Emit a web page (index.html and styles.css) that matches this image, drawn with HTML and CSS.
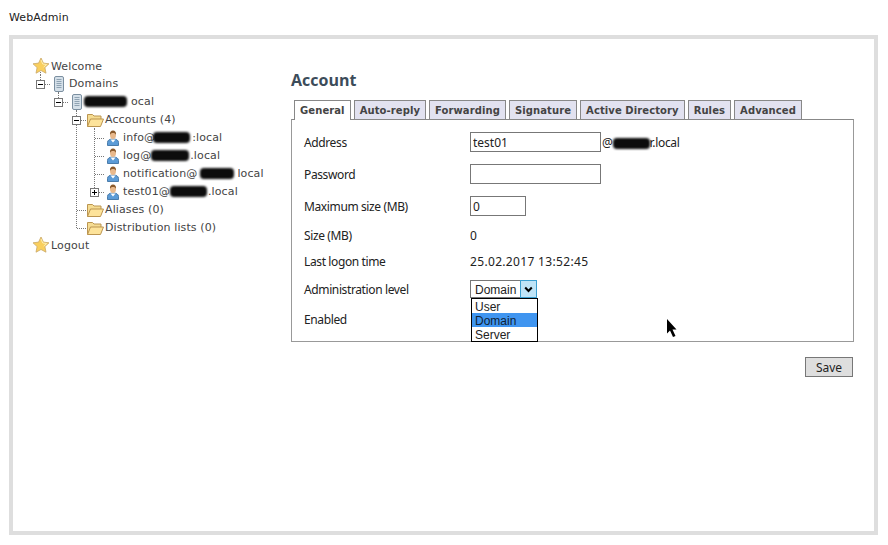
FILE: index.html
```html
<!DOCTYPE html>
<html lang="en">
<head>
<meta charset="utf-8">
<title>WebAdmin</title>
<link rel="stylesheet" href="styles.css">
</head>
<body>
<svg class="defs" width="0" height="0" aria-hidden="true">
  <defs>
    <symbol id="star" viewBox="0 0 18 18">
      <path d="M9 1l2.400 5.100 5.600.7-4.100 3.800 1.100 5.600L9 13.500l-5 2.700 1.100-5.600L1 6.800l5.600-.7z" fill="#f9cf5e" stroke="#c9a86a" stroke-width=".8" stroke-linejoin="round"/>
      <path d="M9 3l1.700 4 4 .5-3 2.600" fill="none" stroke="#fdeeb0" stroke-width="1"/>
    </symbol>
    <symbol id="server" viewBox="0 0 18 18">
      <rect x="4.500" y="1.500" width="9" height="15" rx="1.500" fill="#d5e0e9" stroke="#7b8fa0"/>
      <path d="M6.500 4.500h5M6.500 6.500h5M6.500 8.500h5M6.500 10.500h5M6.500 12.500h5" stroke="#8fa3b3" stroke-width="1"/>
    </symbol>
    <symbol id="folder" viewBox="0 0 18 18">
      <path d="M1.500 15.500V3.500h5l1.500 1.500h7v3" fill="#f5dc92" stroke="#bb9550"/>
      <path d="M1.500 15.500l3-7.500h13l-3 7.500z" fill="#fde39a" stroke="#bb9550" stroke-linejoin="round"/>
    </symbol>
    <symbol id="user" viewBox="0 0 18 18">
      <path d="M3.500 16.500v-3c0-2.300 2-3.500 5.500-3.500s5.500 1.200 5.500 3.500v3z" fill="#5c9bd6" stroke="#4a7cab"/>
      <path d="M6.500 10.500L9 13.500l2.500-3z" fill="#ffffff"/>
      <ellipse cx="9" cy="6" rx="3" ry="4" fill="#e9b98c"/>
      <path d="M6 6c-.4-3 1-4.500 3-4.500s3.400 1.500 3 4.500c-.5-1.500-1.500-2-3-2s-2.500.5-3 2z" fill="#8a5a2c"/>
    </symbol>
  </defs>
</svg>

<header class="page-title">WebAdmin</header>

<div class="frame">
  <nav class="tree">
    <div class="row"><svg class="cell drop"><use href="#star"/></svg><span class="label">Welcome</span></div>
    <div class="row"><span class="cell line-tee-right"><span class="exp minus"></span></span><svg class="cell drop"><use href="#server"/></svg><span class="label">Domains</span></div>
    <div class="row"><span class="cell"></span><span class="cell line-tee-right"><span class="exp minus"></span></span><svg class="cell drop"><use href="#server"/></svg><span class="label label-tight"><i class="blob w43"></i><span class="gap4">ocal</span></span></div>
    <div class="row"><span class="cell"></span><span class="cell"></span><span class="cell line-below"><span class="exp minus"></span></span><svg class="cell drop"><use href="#folder"/></svg><span class="label">Accounts (4)</span></div>
    <div class="row"><span class="cell"></span><span class="cell"></span><span class="cell line-v"></span><span class="cell line-t"></span><svg class="cell"><use href="#user"/></svg><span class="label">info@<i class="blob b-info"></i>:local</span></div>
    <div class="row"><span class="cell"></span><span class="cell"></span><span class="cell line-v"></span><span class="cell line-t"></span><svg class="cell"><use href="#user"/></svg><span class="label">log@<i class="blob b-log"></i>.local</span></div>
    <div class="row"><span class="cell"></span><span class="cell"></span><span class="cell line-v"></span><span class="cell line-t"></span><svg class="cell"><use href="#user"/></svg><span class="label">notification@<i class="blob b-note"></i>local</span></div>
    <div class="row"><span class="cell"></span><span class="cell"></span><span class="cell line-v"></span><span class="cell line-l"><span class="exp plus"></span></span><svg class="cell"><use href="#user"/></svg><span class="label">test01@<i class="blob b-test"></i>.local</span></div>
    <div class="row"><span class="cell"></span><span class="cell"></span><span class="cell line-t"></span><svg class="cell"><use href="#folder"/></svg><span class="label">Aliases (0)</span></div>
    <div class="row"><span class="cell"></span><span class="cell"></span><span class="cell line-l"></span><svg class="cell"><use href="#folder"/></svg><span class="label">Distribution lists (0)</span></div>
    <div class="row"><svg class="cell"><use href="#star"/></svg><span class="label">Logout</span></div>
  </nav>

  <main class="content">
    <h1 class="heading">Account</h1>
    <div class="tabs">
      <a class="tab active">General</a>
      <a class="tab">Auto-reply</a>
      <a class="tab">Forwarding</a>
      <a class="tab">Signature</a>
      <a class="tab">Active Directory</a>
      <a class="tab">Rules</a>
      <a class="tab">Advanced</a>
    </div>
    <form class="panel">
      <label class="field-label">Address</label>
      <div class="field"><input class="input wide" value="test01"><span class="domain">@<i class="blob b-addr"></i>r.local</span></div>
      <label class="field-label">Password</label>
      <div class="field"><input class="input wide" type="text"></div>
      <label class="field-label">Maximum size (MB)</label>
      <div class="field"><input class="input narrow" value="0"></div>
      <span class="field-label">Size (MB)</span>
      <div class="field">0</div>
      <span class="field-label">Last logon time</span>
      <div class="field value">25.02.2017 13:52:45</div>
      <label class="field-label">Administration level</label>
      <div class="field">
        <div class="select">
          <span class="select-value">Domain</span>
          <span class="select-btn"><svg width="9" height="7" viewBox="0 0 9 7"><path d="M1.200 1.500L4.500 5 7.800 1.500" fill="none" stroke="#000" stroke-width="2"/></svg></span>
          <ul class="options">
            <li>User</li>
            <li class="selected">Domain</li>
            <li>Server</li>
          </ul>
        </div>
      </div>
      <span class="field-label">Enabled</span>
      <div class="field"></div>
    </form>
    <div class="actions"><button class="save" type="button">Save</button></div>
  </main>

  <svg class="cursor" width="13" height="20" viewBox="0 0 13 20"><path d="M1 1v14.500l3-3 3 6.500 2.500-1-3-6.500h4z" fill="#000"/></svg>
</div>
</body>
</html>
```
FILE: styles.css
```css
* { box-sizing: border-box; }
html, body { margin: 0; padding: 0; background: #fff; }
body {
  width: 888px;
  height: 545px;
  overflow: hidden;
  font-family: "DejaVu Sans", sans-serif;
  font-size: 11px;
  color: #333;
}
.defs { position: absolute; }

.page-title {
  height: 35px;
  padding: 11px 0 0 9px;
  line-height: 13px;
  font-size: 11px;
  letter-spacing: .1px;
  color: #222;
}

.frame {
  position: relative;
  display: flex;
  width: 869px;
  height: 500px;
  margin-left: 9px;
  border: 4px solid #dedede;
  padding: 18px 20px 0 19px;
}

/* tree */
.tree { width: 259px; flex: none; color: #444; }
.row { display: flex; align-items: center; height: 18px; white-space: nowrap; }
.row:last-child { margin-top: -1px; }
.cell { position: relative; display: block; flex: none; width: 18px; height: 18px; }
.label { margin-left: 1px; line-height: 18px; height: 18px; letter-spacing: .12px; }
.row:first-child .label,
.row:last-child .label { line-height: 19px; }
.label-tight { margin-left: -2px; }
.gap4 { margin-left: 4px; }

.drop { background: repeating-linear-gradient(#777 0 1px, transparent 1px 2px) 8px 15px / 1px 3px no-repeat; }
.line-v { background: repeating-linear-gradient(#777 0 1px, transparent 1px 2px) 8px 0 / 1px 100% no-repeat; }
.line-t,
.line-below {
  background:
    repeating-linear-gradient(#777 0 1px, transparent 1px 2px) 8px 0 / 1px 100% no-repeat,
    repeating-linear-gradient(90deg, #777 0 1px, transparent 1px 2px) 9px 9px / 9px 1px no-repeat;
}
.line-l {
  background:
    repeating-linear-gradient(#777 0 1px, transparent 1px 2px) 8px 0 / 1px 10px no-repeat,
    repeating-linear-gradient(90deg, #777 0 1px, transparent 1px 2px) 9px 9px / 9px 1px no-repeat;
}
.line-tee-right {
  background:
    repeating-linear-gradient(#777 0 1px, transparent 1px 2px) 8px 0 / 1px 5px no-repeat,
    repeating-linear-gradient(90deg, #777 0 1px, transparent 1px 2px) 9px 9px / 9px 1px no-repeat;
}

.exp {
  position: absolute;
  left: 4px;
  top: 5px;
  width: 9px;
  height: 9px;
  border: 1px solid #777;
  background: #fff;
}
.exp::before {
  content: "";
  position: absolute;
  left: 1px;
  top: 3px;
  width: 5px;
  height: 1px;
  background: #000;
}
.plus::after {
  content: "";
  position: absolute;
  left: 3px;
  top: 1px;
  width: 1px;
  height: 5px;
  background: #000;
}

.blob {
  display: inline-block;
  height: 11px;
  vertical-align: -2px;
  background: #0c0c0c;
  border-radius: 4px;
  filter: blur(1.2px);
}
.b-info { width: 37px; margin: 0 2px 0 -2px; }
.b-log { width: 38px; margin: 0 1px 0 0; }
.b-note { width: 34px; margin: 0 3px 0 3px; }
.b-test { width: 37px; margin: 0 1px 0 0; }
.b-addr { width: 37px; }
.w43 { width: 43px; }

/* content */
.content { flex: 1; min-width: 0; }
.heading {
  margin: 0;
  height: 43px;
  padding-top: 13px;
  font: bold 16px/20px "Open Sans", sans-serif;
  color: #3c4c5a;
}
.tabs { display: flex; gap: 3px; padding-left: 3px; height: 20px; position: relative; z-index: 1; }
.tab {
  display: block;
  height: 19px;
  padding: 0 5px;
  border: 1px solid #888;
  border-bottom-width: 0;
  background: #e2e2f0;
  font: bold 10px/19px "DejaVu Sans", sans-serif;
  letter-spacing: .09px;
  color: #444;
  white-space: nowrap;
}
.tab.active { height: 20px; background: #fff; }

.panel {
  display: grid;
  grid-template-columns: 166px 1fr;
  grid-template-rows: 32px 32px 32px 26px 26px 30px 30px;
  height: 223px;
  margin-top: -1px;
  padding: 6px 12px 0;
  border: 1px solid #999;
  border-top-color: #888;
  font: 12px "Noto Sans", sans-serif;
  color: #222;
}
.field-label, .field { display: flex; align-items: center; }
.field-label { letter-spacing: -.38px; }
.value { letter-spacing: .33px; }
.input {
  height: 20px;
  padding: 0 2px;
  border: 1px solid #777;
  border-radius: 0;
  font: 12px "Noto Sans", sans-serif;
  color: #222;
  background: #fff;
  outline: none;
}
.wide { width: 131px; }
.narrow { width: 56px; }
.domain { margin-left: 1px; letter-spacing: -.3px; }

.select {
  position: relative;
  display: flex;
  width: 67px;
  height: 18px;
  border: 1px solid #777;
  background: #fff;
  font: 12px "Liberation Sans", sans-serif;
}
.select-value { flex: 1; padding-left: 4px; line-height: 18px; height: 16px; }
.select-btn {
  display: flex;
  align-items: center;
  justify-content: center;
  width: 17px;
  margin: -1px -1px -1px 0;
  background: #bfe4f7;
  border: 1px solid #3c9fd0;
}
.options {
  position: absolute;
  left: 0;
  top: 17px;
  width: 67px;
  margin: 0;
  padding: 0;
  list-style: none;
  border: 1px solid #000;
  background: #fff;
  z-index: 2;
}
.options li { height: 14px; padding-left: 3px; line-height: 16px; }
.options .selected { background: #3f95f0; color: #123; }

.actions { display: flex; justify-content: flex-end; padding: 15px 1px 0 0; }
.save {
  width: 48px;
  height: 20px;
  padding: 0;
  border: 1px solid #777;
  border-radius: 0;
  background: #dedede;
  font: 12px "Noto Sans", sans-serif;
  color: #222;
}

.cursor { position: absolute; left: 653px; top: 279px; }
```
